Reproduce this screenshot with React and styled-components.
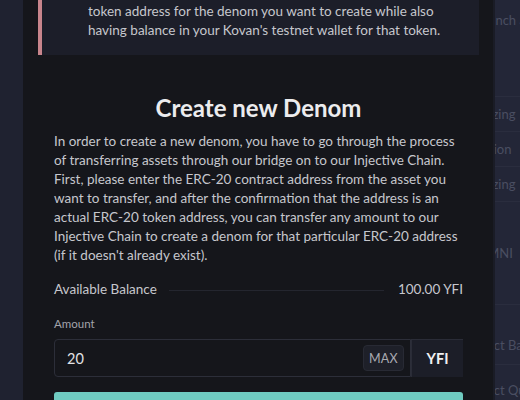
import React from "react";
import styled, { createGlobalStyle } from "styled-components";

const Global = createGlobalStyle`
  html, body { margin: 0; padding: 0; }
  body {
    width: 520px;
    height: 400px;
    overflow: hidden;
    background: #1f2230;
    font-family: Lato, "Noto Sans", sans-serif;
    -webkit-font-smoothing: antialiased;
  }
`;

const Stage = styled.div`
  width: 520px;
  height: 400px;
  overflow: hidden;
  display: flex;
`;

const Gutter = styled.div`
  width: 23px;
  flex: none;
  background: #1f2230;
`;

/* ---------- background list, dimmed, partly hidden by the modal ---------- */
const PageList = styled.div`
  flex: 1;
  min-width: 0;
  overflow: hidden;
  background: #232637;
  border-left: 2px solid #1a1c26;
  display: flex;
  flex-direction: column;
`;

const ListRow = styled.div`
  height: ${(p) => p.$h}px;
  flex: none;
  box-sizing: border-box;
  border-bottom: 1px solid ${(p) => (p.$line ? "#2a2d3e" : "transparent")};
  padding-top: ${(p) => p.$top || 0}px;
  display: flex;
  align-items: ${(p) => (p.$top ? "flex-start" : "center")};
  color: #4a4e61;
  font-size: 13px;
  line-height: 18px;
  white-space: nowrap;
`;

const Clipped = styled.span`
  margin-left: ${(p) => p.$shift}px;
`;

/* ---------- modal ---------- */
const Modal = styled.div`
  width: 470px;
  flex: none;
  margin-top: -33px;
  background: #15161b;
  display: flex;
  flex-direction: column;
`;

const Alert = styled.div`
  margin: 0 14px 0 15px;
  background: #1c1e29;
  border-left: 4px solid #c8858c;
  padding: 16px 10px 15px 46px;
  color: #c6c7cd;
  font-size: 13.5px;
  line-height: 19px;
`;

const Line = styled.span`
  display: block;
  white-space: nowrap;
`;

const Body = styled.div`
  padding: 39px 30px 0 31px;
  display: flex;
  flex-direction: column;
`;

const Title = styled.h2`
  margin: 0;
  text-align: center;
  color: #ececee;
  font-size: 24px;
  line-height: 28px;
  font-weight: 700;
`;

const Paragraph = styled.p`
  margin: 10px 0 0;
  color: #c6c7cd;
  font-size: 13.5px;
  line-height: 19px;
`;

const BalanceRow = styled.div`
  margin-top: 15px;
  display: flex;
  align-items: center;
  color: #c6c7cd;
  font-size: 13.5px;
  line-height: 19px;
`;

const Rule = styled.div`
  flex: 1;
  height: 1px;
  margin: 1px 14px 0 12px;
  background: #24262f;
`;

const Label = styled.div`
  margin-top: 17px;
  color: #a3a4ab;
  font-size: 11.5px;
  line-height: 16px;
`;

const InputRow = styled.div`
  margin-top: 7px;
  display: flex;
  height: 38px;
`;

const InputBox = styled.div`
  flex: 1;
  box-sizing: border-box;
  border: 1px solid #2c2e39;
  border-radius: 4px 0 0 4px;
  display: flex;
  align-items: center;
  padding: 0 6px 0 12px;
`;

const Value = styled.span`
  flex: 1;
  color: #e2e2e5;
  font-size: 14.5px;
`;

const MaxButton = styled.button`
  height: 26px;
  width: 41px;
  padding: 0;
  border: 1px solid #282a34;
  border-radius: 4px;
  background: #1e2029;
  color: #a9aab1;
  font-family: inherit;
  font-size: 12.5px;
  letter-spacing: 0.3px;
`;

const Unit = styled.div`
  width: 52px;
  box-sizing: border-box;
  border-top: 1px solid #2a2c37;
  border-left: 1px solid #2a2c37;
  background: #1c1e28;
  display: flex;
  align-items: center;
  justify-content: center;
  color: #f0f0f2;
  font-weight: 700;
  font-size: 14.5px;
`;

const Submit = styled.button`
  margin-top: 15px;
  height: 44px;
  border: 0;
  border-radius: 3px;
  background: #6fcbc1;
`;

const rows = [
  { h: 97, top: 11, text: "Launch a Market", shift: -20, line: true },
  { h: 35, text: "Stabilizing", shift: -37, line: true },
  { h: 35, text: "Activation", shift: -42, line: true },
  { h: 35, text: "Stabilizing", shift: -37, line: true },
  { h: 103, text: "UNI/OMNI", shift: -47, line: true },
  { h: 20, text: "", shift: 0, line: false },
  { h: 40, text: "Select Base", shift: -25, line: true },
  { h: 50, text: "Select Quote", shift: -25, line: false },
];

const paragraph = [
  "In order to create a new denom, you have to go through the process",
  "of transferring assets through our bridge on to our Injective Chain.",
  "First, please enter the ERC-20 contract address from the asset you",
  "want to transfer, and after the confirmation that the address is an",
  "actual ERC-20 token address, you can transfer any amount to our",
  "Injective Chain to create a denom for that particular ERC-20 address",
  "(if it doesn't already exist).",
];

export default function App() {
  return (
    <>
      <Global />
      <Stage>
        <Gutter />
        <Modal>
          <Alert>
            <Line>To create a new denom you need to provide the ERC-20</Line>
            <Line>token address for the denom you want to create while also</Line>
            <Line>having balance in your Kovan's testnet wallet for that token.</Line>
          </Alert>
          <Body>
            <Title>Create new Denom</Title>
            <Paragraph>
              {paragraph.map((l, i) => (
                <Line key={i}>{l}</Line>
              ))}
            </Paragraph>
            <BalanceRow>
              <span>Available Balance</span>
              <Rule />
              <span>100.00 YFI</span>
            </BalanceRow>
            <Label>Amount</Label>
            <InputRow>
              <InputBox>
                <Value>20</Value>
                <MaxButton>MAX</MaxButton>
              </InputBox>
              <Unit>YFI</Unit>
            </InputRow>
            <Submit />
          </Body>
        </Modal>
        <PageList>
          {rows.map((r, i) => (
            <ListRow key={i} $h={r.h} $top={r.top} $line={r.line}>
              <Clipped $shift={r.shift}>{r.text}</Clipped>
            </ListRow>
          ))}
        </PageList>
      </Stage>
    </>
  );
}
